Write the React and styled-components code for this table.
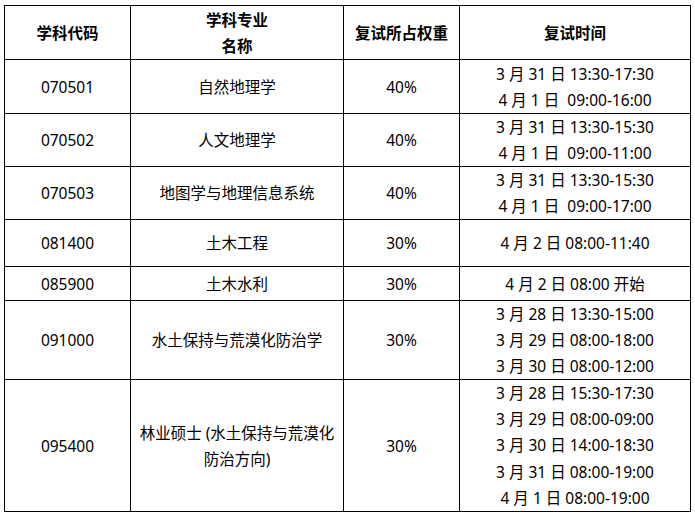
import React from 'react'
import styled, { createGlobalStyle } from 'styled-components'

const GlobalStyle = createGlobalStyle`
  html, body {
    margin: 0;
    padding: 0;
    background: #fff;
  }
  body {
    font-family: "Noto Sans", "Noto Sans CJK SC", sans-serif;
    color: #000;
  }
`

const Table = styled.table`
  border-collapse: collapse;
  margin: 5px 0 0 4px;
  table-layout: fixed;
  width: 686px;
  font-size: 15.5px;
  line-height: 26px;
`

const Row = styled.tr`
  height: ${props => props.h}px;
`

const HeadCell = styled.th`
  border: 1px solid #000;
  padding: 0 6px;
  font-weight: 700;
  text-align: center;
  vertical-align: middle;
`

const Cell = styled.td`
  border: 1px solid #000;
  padding: 0 6px;
  text-align: center;
  vertical-align: middle;
  white-space: nowrap;
`

const TimeLine = styled.div`
  line-height: ${props => props.lh || 26}px;
`

const cols = [126, 213, 116, 231]

const rows = [
  { code: '070501', name: '自然地理学', weight: '40%', times: ['3 月 31 日 13:30-17:30', '4 月 1 日\u00a0\u00a009:00-16:00'], h: 54 },
  { code: '070502', name: '人文地理学', weight: '40%', times: ['3 月 31 日 13:30-15:30', '4 月 1 日\u00a0\u00a009:00-11:00'], h: 53 },
  { code: '070503', name: '地图学与地理信息系统', weight: '40%', times: ['3 月 31 日 13:30-15:30', '4 月 1 日\u00a0\u00a009:00-17:00'], h: 53 },
  { code: '081400', name: '土木工程', weight: '30%', times: ['4 月 2 日 08:00-11:40'], h: 47 },
  { code: '085900', name: '土木水利', weight: '30%', times: ['4 月 2 日 08:00 开始'], h: 34 },
  { code: '091000', name: '水土保持与荒漠化防治学', weight: '30%', times: ['3 月 28 日 13:30-15:00', '3 月 29 日 08:00-18:00', '3 月 30 日 08:00-12:00'], h: 79 },
  {
    code: '095400',
    name: <>林业硕士 (水土保持与荒漠化<br />防治方向)</>,
    weight: '30%',
    times: ['3 月 28 日 15:30-17:30', '3 月 29 日 08:00-09:00', '3 月 30 日 14:00-18:30', '3 月 31 日 08:00-19:00', '4 月 1 日 08:00-19:00'],
    h: 132,
    lh: 26.2,
  },
]

export default function App() {
  return (
    <>
      <GlobalStyle />
      <Table>
        <colgroup>
          {cols.map((w, i) => <col key={i} style={{ width: w }} />)}
        </colgroup>
        <thead>
          <Row h={54}>
            <HeadCell>学科代码</HeadCell>
            <HeadCell>学科专业<br />名称</HeadCell>
            <HeadCell>复试所占权重</HeadCell>
            <HeadCell>复试时间</HeadCell>
          </Row>
        </thead>
        <tbody>
          {rows.map(r => (
            <Row key={r.code} h={r.h}>
              <Cell>{r.code}</Cell>
              <Cell>{r.name}</Cell>
              <Cell>{r.weight}</Cell>
              <Cell>
                {r.times.map(t => <TimeLine key={t} lh={r.lh}>{t}</TimeLine>)}
              </Cell>
            </Row>
          ))}
        </tbody>
      </Table>
    </>
  )
}
